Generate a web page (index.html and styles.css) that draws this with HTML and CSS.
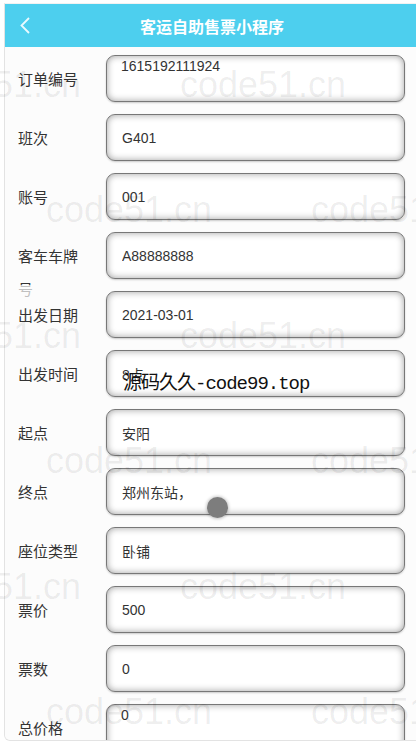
FILE: index.html
```html
<!DOCTYPE html>
<html lang="zh-CN">
<head>
    <meta charset="UTF-8">
    <meta name="viewport" content="width=device-width, initial-scale=1.0">
    <title>客运自助售票小程序</title>
    <link rel="stylesheet" href="styles.css">
</head>
<body>
    <div class="phone">
        <div class="header">
            <svg class="back" width="12" height="17" viewBox="0 0 12 17">
                <polyline points="10,1 2.5,8.5 10,16" fill="none" stroke="#eafaff" stroke-width="1.8"/>
            </svg>
            <h1>客运自助售票小程序</h1>
            <span></span>
        </div>
        <form class="order">
            <div class="row">
                <label>订单编号</label>
                <textarea class="field area" readonly>1615192111924</textarea>
            </div>
            <div class="row">
                <label>班次</label>
                <input class="field" type="text" value="G401" readonly>
            </div>
            <div class="row">
                <label>账号</label>
                <input class="field" type="text" value="001" readonly>
            </div>
            <div class="row">
                <label>客车车牌号</label>
                <input class="field" type="text" value="A88888888" readonly>
            </div>
            <div class="row">
                <label>出发日期</label>
                <input class="field" type="text" value="2021-03-01" readonly>
            </div>
            <div class="row">
                <label>出发时间</label>
                <input class="field" type="text" value="8点" readonly>
            </div>
            <div class="row">
                <label>起点</label>
                <input class="field" type="text" value="安阳" readonly>
            </div>
            <div class="row">
                <label>终点</label>
                <input class="field" type="text" value="郑州东站，" readonly>
            </div>
            <div class="row">
                <label>座位类型</label>
                <input class="field" type="text" value="卧铺" readonly>
            </div>
            <div class="row">
                <label>票价</label>
                <input class="field" type="text" value="500" readonly>
            </div>
            <div class="row">
                <label>票数</label>
                <input class="field" type="text" value="0" readonly>
            </div>
            <div class="row">
                <label>总价格</label>
                <textarea class="field area" readonly>0</textarea>
            </div>
        </form>
    </div>

    <div class="watermark">
        <div class="wm-row odd"><span>code51.cn</span><span>code51.cn</span><span>code51.cn</span></div>
        <div class="wm-row even"><span>code51.cn</span><span>code51.cn</span></div>
        <div class="wm-row odd"><span>code51.cn</span><span>code51.cn</span><span>code51.cn</span></div>
        <div class="wm-row even"><span>code51.cn</span><span>code51.cn</span></div>
        <div class="wm-row odd"><span>code51.cn</span><span>code51.cn</span><span>code51.cn</span></div>
        <div class="wm-row even"><span>code51.cn</span><span>code51.cn</span></div>
    </div>
    <div class="stamp">源码久久-code99.top</div>
    <div class="touch"></div>
</body>
</html>
```

FILE: styles.css
```css
html, body {
    margin: 0;
    overflow: hidden;
}
body {
    background: #fff;
    font-family: "Liberation Sans", "Noto Sans CJK SC", sans-serif;
}
.phone {
    margin: 3px 0 0 4px;
    width: 414px;
    height: 736px;
    border: 1px solid #e3e3e3;
    border-top-color: #f2f2f2;
    border-radius: 0 0 0 6px;
    overflow: hidden;
    background: #fcfcfc;
}
.header {
    height: 43px;
    background-color: #4dcfee;
    display: grid;
    grid-template-columns: 60px 1fr 60px;
    align-items: center;
}
.back {
    margin-left: 14px;
    display: block;
}
.header h1 {
    margin: 0;
    text-align: center;
    color: #fff;
    font-size: 16px;
    font-weight: bold;
    font-family: "Noto Sans CJK SC", sans-serif;
}
.order {
    margin: 0;
    padding-top: 2px;
}
.row {
    position: relative;
    display: flex;
    align-items: center;
    padding: 6px 14px 6px 13px;
    background: rgba(252, 252, 252, 0.7);
}
.row label {
    flex-shrink: 0;
    width: 64px;
    height: 33px;
    margin-right: 24px;
    line-height: 33px;
    font-size: 15px;
    color: #333;
    font-family: "Noto Sans CJK SC", sans-serif;
}
.field {
    flex: 1;
    min-width: 0;
    height: 47px;
    margin: 0;
    box-sizing: border-box;
    padding: 0 15px;
    border: 1px solid #777;
    border-radius: 9px;
    background: #fff;
    box-shadow: inset 0 0 7px rgba(0, 0, 0, 0.38), 0 1px 2px rgba(0, 0, 0, 0.2);
    font-family: "Liberation Sans", "Noto Sans CJK SC", sans-serif;
    font-size: 14px;
    color: #333;
    outline: none;
    -webkit-appearance: none;
    appearance: none;
}
.area {
    padding: 2px 14px;
    line-height: 16px;
    resize: none;
    overflow: hidden;
}
.watermark {
    position: absolute;
    top: 0;
    left: 0;
    width: 100%;
    height: 100%;
    overflow: hidden;
    pointer-events: none;
    padding-top: 67px;
    box-sizing: border-box;
    font-size: 36px;
    color: rgba(0, 0, 0, 0.07);
}
.wm-row {
    display: flex;
    height: 125.4px;
    line-height: 36px;
    white-space: nowrap;
}
.wm-row span {
    flex: none;
    width: 265px;
}
.wm-row.odd {
    margin-left: -85px;
}
.wm-row.even {
    margin-left: 46px;
}
.stamp {
    position: absolute;
    left: 123px;
    top: 375px;
    font-family: "Liberation Mono", "Noto Sans CJK SC", monospace;
    font-size: 19px;
    line-height: 19px;
    letter-spacing: -1px;
    color: #111;
}
.touch {
    position: absolute;
    left: 207px;
    top: 497px;
    width: 21px;
    height: 21px;
    border-radius: 50%;
    background: #7d7d7d;
    box-shadow: 0 0 3px 1px rgba(0, 0, 0, 0.2);
}
```
